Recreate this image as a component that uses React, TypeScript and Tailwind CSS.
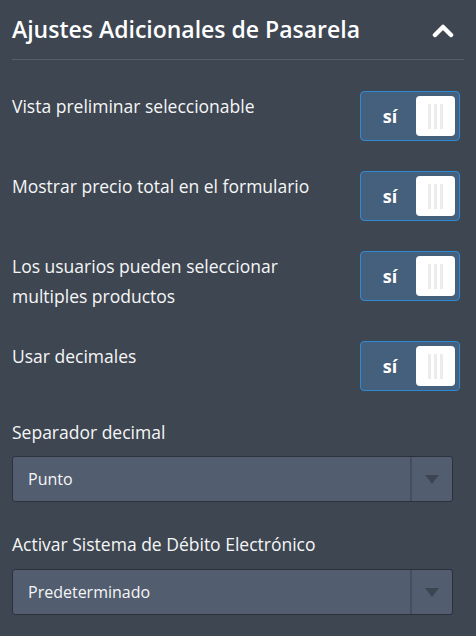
import React from 'react';

const font = { fontFamily: '"Open Sans", "Noto Sans", sans-serif' };

const Toggle = () => (
  <div className="flex h-[50px] w-[100px] shrink-0 items-center rounded-[4px] border border-[#2e8ad4] bg-[#45607c] pl-[3px] pr-[4px]">
    <span className="flex-1 text-center text-[18px] font-bold text-white">sí</span>
    <div className="flex h-[40px] w-[39px] items-center justify-center gap-[3px] rounded-[4px] bg-white">
      <span className="h-[25px] w-[3px] bg-[#ececec]" />
      <span className="h-[25px] w-[3px] bg-[#ececec]" />
      <span className="h-[25px] w-[3px] bg-[#ececec]" />
    </div>
  </div>
);

const ToggleRow = ({ label }: { label: React.ReactNode }) => (
  <div className="flex items-start justify-between">
    <p className="max-w-[320px] text-[17.5px] leading-[30px] text-[#f5f6f7]">{label}</p>
    <Toggle />
  </div>
);

const Select = ({ value }: { value: string }) => (
  <div className="flex h-[46px] w-full items-stretch rounded-[3px] border border-[#2c323c] bg-[#525d6f]">
    <div className="flex flex-1 items-center px-[15px] text-[16px] text-[#f5f6f7]">{value}</div>
    <div className="flex w-[42px] items-center justify-center border-l-2 border-[#454e5c]">
      <svg width="14" height="10" viewBox="0 0 14 10">
        <path d="M0 1h14L7 10z" fill="#3d4552" />
      </svg>
    </div>
  </div>
);

export default function App() {
  return (
    <div className="min-h-[636px] w-[476px] bg-[#3e4651] px-[12px]" style={font}>
      <div className="flex h-[60px] items-center justify-between border-b border-[#56606c] pr-[10px]">
        <h2 className="text-[23px] font-semibold text-white">Ajustes Adicionales de Pasarela</h2>
        <svg width="22" height="16" viewBox="0 0 22 16">
          <path d="M3 13L11 5L19 13" fill="none" stroke="#fff" strokeWidth="4.5" strokeLinejoin="round" strokeLinecap="round" />
        </svg>
      </div>
      <div className="flex flex-col gap-[30px] pr-[4px] pt-[31px]">
        <ToggleRow label="Vista preliminar seleccionable" />
        <ToggleRow label="Mostrar precio total en el formulario" />
        <ToggleRow label={<>Los usuarios pueden seleccionar<br />multiples productos</>} />
        <ToggleRow label="Usar decimales" />
      </div>
      <div className="mt-[26px] pr-[11px]">
        <p className="text-[17.5px] leading-[30px] text-[#f5f6f7]">Separador decimal</p>
        <div className="mt-[9px]">
          <Select value="Punto" />
        </div>
        <p className="mt-[27px] text-[17.5px] leading-[30px] text-[#f5f6f7]">Activar Sistema de Débito Electrónico</p>
        <div className="mt-[10px]">
          <Select value="Predeterminado" />
        </div>
      </div>
    </div>
  );
}
